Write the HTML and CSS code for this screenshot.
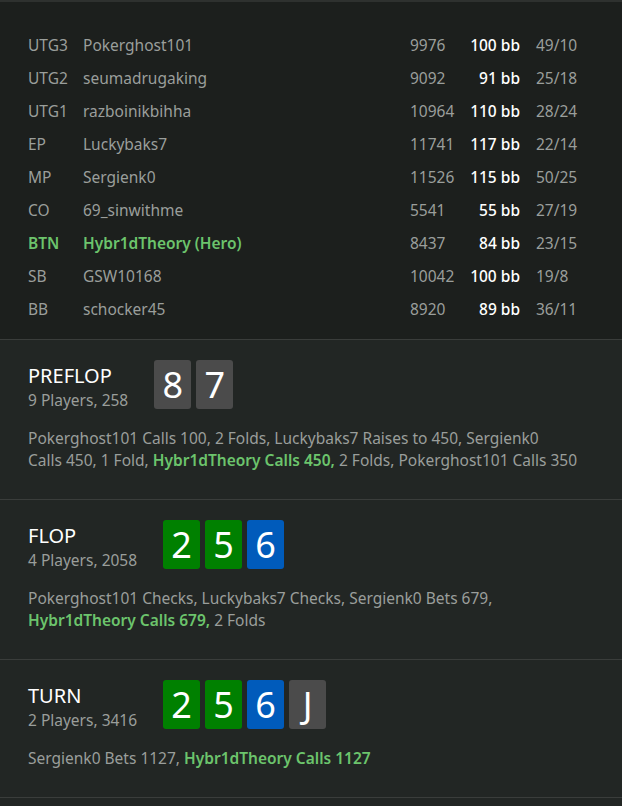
FILE: index.html
```html
<!DOCTYPE html>
<html>
<head>
<meta charset="utf-8">
<link rel="stylesheet" href="styles.css">
</head>
<body>
<div class="page">
  <div class="players">
    <div class="row"><span class="pos">UTG3</span><span class="name">Pokerghost101</span><span class="stack">9976</span><span class="bb">100 bb</span><span class="ratio">49/10</span></div>
    <div class="row"><span class="pos">UTG2</span><span class="name">seumadrugaking</span><span class="stack">9092</span><span class="bb">91 bb</span><span class="ratio">25/18</span></div>
    <div class="row"><span class="pos">UTG1</span><span class="name">razboinikbihha</span><span class="stack">10964</span><span class="bb">110 bb</span><span class="ratio">28/24</span></div>
    <div class="row"><span class="pos">EP</span><span class="name">Luckybaks7</span><span class="stack">11741</span><span class="bb">117 bb</span><span class="ratio">22/14</span></div>
    <div class="row"><span class="pos">MP</span><span class="name">Sergienk0</span><span class="stack">11526</span><span class="bb">115 bb</span><span class="ratio">50/25</span></div>
    <div class="row"><span class="pos">CO</span><span class="name">69_sinwithme</span><span class="stack">5541</span><span class="bb">55 bb</span><span class="ratio">27/19</span></div>
    <div class="row hero"><span class="pos">BTN</span><span class="name">Hybr1dTheory (Hero)</span><span class="stack">8437</span><span class="bb">84 bb</span><span class="ratio">23/15</span></div>
    <div class="row"><span class="pos">SB</span><span class="name">GSW10168</span><span class="stack">10042</span><span class="bb">100 bb</span><span class="ratio">19/8</span></div>
    <div class="row"><span class="pos">BB</span><span class="name">schocker45</span><span class="stack">8920</span><span class="bb">89 bb</span><span class="ratio">36/11</span></div>
  </div>

  <div class="street">
    <div class="street-head">
      <div class="street-info">
        <div class="street-title">PREFLOP</div>
        <div class="street-sub">9 Players, 258</div>
      </div>
      <div class="cards">
        <span class="card gray">8</span><span class="card gray">7</span>
      </div>
    </div>
    <p class="actions"><span class="line">Pokerghost101 Calls 100, 2 Folds, Luckybaks7 Raises to 450, Sergienk0</span><span class="line">Calls 450, 1 Fold, <b class="me">Hybr1dTheory Calls 450,</b> 2 Folds, Pokerghost101 Calls 350</span></p>
  </div>

  <div class="street">
    <div class="street-head">
      <div class="street-info">
        <div class="street-title">FLOP</div>
        <div class="street-sub">4 Players, 2058</div>
      </div>
      <div class="cards">
        <span class="card green">2</span><span class="card green">5</span><span class="card blue">6</span>
      </div>
    </div>
    <p class="actions"><span class="line">Pokerghost101 Checks, Luckybaks7 Checks, Sergienk0 Bets 679,</span><span class="line"><b class="me">Hybr1dTheory Calls 679,</b> 2 Folds</span></p>
  </div>

  <div class="street">
    <div class="street-head">
      <div class="street-info">
        <div class="street-title">TURN</div>
        <div class="street-sub">2 Players, 3416</div>
      </div>
      <div class="cards">
        <span class="card green">2</span><span class="card green">5</span><span class="card blue">6</span><span class="card gray">J</span>
      </div>
    </div>
    <p class="actions"><span class="line">Sergienk0 Bets 1127, <b class="me">Hybr1dTheory Calls 1127</b></span></p>
  </div>
</div>
</body>
</html>
```

FILE: styles.css
```css
html, body {
  margin: 0;
  padding: 0;
  background: #222624;
}
body {
  font-family: "Noto Sans", "Open Sans", sans-serif;
  font-size: 15.5px;
  color: #9a9e9b;
}
.page {
  width: 622px;
  min-height: 806px;
  background: #222624;
}
.players {
  background: #1c1f1d;
  border-top: 2px solid #2e312f;
  padding: 26px 0 14px 28px;
  border-bottom: 1px solid #3a3d3b;
}
.row {
  display: grid;
  grid-template-columns: 55px 327px 50px 60px 1fr;
  height: 33px;
  align-items: center;
  white-space: nowrap;
  font-size: 15.5px;
}
.row .bb {
  color: #ffffff;
  font-weight: 500;
  text-align: right;
}
.row .ratio {
  padding-left: 16px;
}
.row.hero .pos,
.row.hero .name {
  color: #6cc46c;
  font-weight: 600;
}
.street {
  padding: 20px 28px 28px 28px;
  border-bottom: 1px solid #3a3d3b;
}
.street-head {
  display: flex;
  align-items: flex-start;
  gap: 26px;
}
.street-info {
  padding-top: 3px;
}
.street-title {
  color: #ffffff;
  font-size: 20px;
  line-height: 26px;
}
.street-sub {
  font-size: 15.5px;
  line-height: 22px;
}
.cards {
  display: flex;
  gap: 5px;
}
.card {
  width: 37px;
  height: 49px;
  border-radius: 3px;
  color: #ffffff;
  font-size: 36px;
  line-height: 49px;
  text-align: center;
}
.card.gray { background: #4b4b4b; }
.card.green { background: #008000; }
.card.blue { background: #005bbb; }
.actions {
  margin: 16px 0 0 0;
  line-height: 22px;
  font-size: 15.5px;
}
.line {
  display: block;
  white-space: nowrap;
}
.me {
  color: #6cc46c;
  font-weight: 600;
}
```
